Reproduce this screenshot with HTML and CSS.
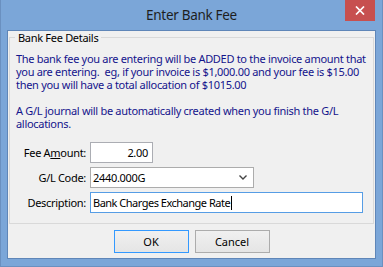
FILE: index.html
```html
<!DOCTYPE html>
<html>
<head>
<meta charset="utf-8">
<title>Enter Bank Fee</title>
<link rel="stylesheet" href="styles.css">
</head>
<body>
<div class="window">
  <div class="titlebar">
    <div class="title">Enter Bank Fee</div>
    <div class="close"><svg width="10" height="9" viewBox="0 0 10 9"><path d="M1 0.5 L9 8.5 M9 0.5 L1 8.5" stroke="#fff" stroke-width="1.7" fill="none"/></svg></div>
  </div>
  <div class="client">
    <fieldset class="group">
      <legend>Bank Fee Details</legend>
      <p class="info">The bank fee you are entering will be ADDED to the invoice amount that<br>you are entering.&nbsp; eg, if your invoice is $1,000.00 and your fee is $15.00<br>then you will have a total allocation of $1015.00</p>
      <p class="info">A G/L journal will be automatically created when you finish the G/L<br>allocations.</p>
      <div class="form">
        <label class="lbl">Fee A<u>m</u>ount:</label>
        <div class="box amount">2.00</div>
        <label class="lbl">G/L Code:</label>
        <div class="box combo"><span>2440.000G</span><svg width="8" height="5" viewBox="0 0 8 5"><path d="M0.5 0.5 L4 4 L7.5 0.5" stroke="#444" stroke-width="1.4" fill="none"/></svg></div>
        <label class="lbl">Description:</label>
        <div class="box desc">Bank Charges Exchange Rate<span class="caret"></span></div>
      </div>
    </fieldset>
    <div class="buttons">
      <button class="btn default">OK</button>
      <button class="btn">Cancel</button>
    </div>
  </div>
</div>
</body>
</html>
```
FILE: styles.css
```css
* { box-sizing: border-box; }
html, body { margin: 0; padding: 0; }
body {
  width: 383px;
  height: 267px;
  overflow: hidden;
  font-family: "Noto Sans", "Open Sans", sans-serif;
  font-size: 11px;
  letter-spacing: -0.3px;
}
.window {
  width: 383px;
  height: 267px;
  background: #7ba6d8;
  border: 1px solid #6a90c0;
  border-top: none;
  padding: 0 6px 7px;
  display: flex;
  flex-direction: column;
}
.titlebar {
  height: 30px;
  flex: none;
  display: grid;
  grid-template-columns: 1fr auto 1fr;
  align-items: start;
}
.title {
  grid-column: 2;
  font-size: 13.5px;
  line-height: 30px;
  color: #1e1e1e;
}
.close {
  grid-column: 3;
  justify-self: end;
  width: 30px;
  height: 21px;
  margin-right: 1px;
  background: #c75050;
  display: flex;
  align-items: center;
  justify-content: center;
}
.client {
  flex: 1;
  background: #f0f0f0;
  border: 1px solid #5f86b8;
  display: flex;
  flex-direction: column;
}
.group {
  margin: 0 1px;
  padding: 8px 6px 10px 6px;
  border: 1px solid #d9d9d9;
  min-width: 0;
}
.group legend {
  padding: 0 3px;
  margin-left: -1px;
  line-height: 13px;
  color: #000;
}
.info {
  margin: 0 0 13px;
  color: #14148c;
  line-height: 13px;
  white-space: nowrap;
}
.info + .info { margin-bottom: 12px; }
.form {
  display: grid;
  grid-template-columns: 70px auto;
  column-gap: 4px;
  row-gap: 4px;
  align-items: center;
  justify-items: start;
}
.lbl { justify-self: end; color: #000; white-space: nowrap; }
.box {
  height: 21px;
  background: #fff;
  border: 1px solid #abadb3;
  display: flex;
  align-items: center;
  padding: 0 2px;
  color: #000;
  white-space: nowrap;
}
.amount { width: 63px; justify-content: flex-end; padding-right: 4px; }
.combo { width: 164px; justify-content: space-between; border-color: #acacac; padding-right: 6px; }
.desc { width: 273px; border-color: #569de5; letter-spacing: -0.5px; }
.caret { width: 1px; height: 14px; background: #000; margin-left: 1px; }
.buttons {
  display: flex;
  justify-content: center;
  gap: 6px;
  margin-top: 6px;
}
.btn {
  width: 75px;
  height: 23px;
  font: inherit;
  font-size: 11px;
  border: 1px solid #acacac;
  background: linear-gradient(#f0f0f0, #e5e5e5);
  color: #000;
  padding: 0;
}
.btn.default { border-color: #3399ff; }
```
